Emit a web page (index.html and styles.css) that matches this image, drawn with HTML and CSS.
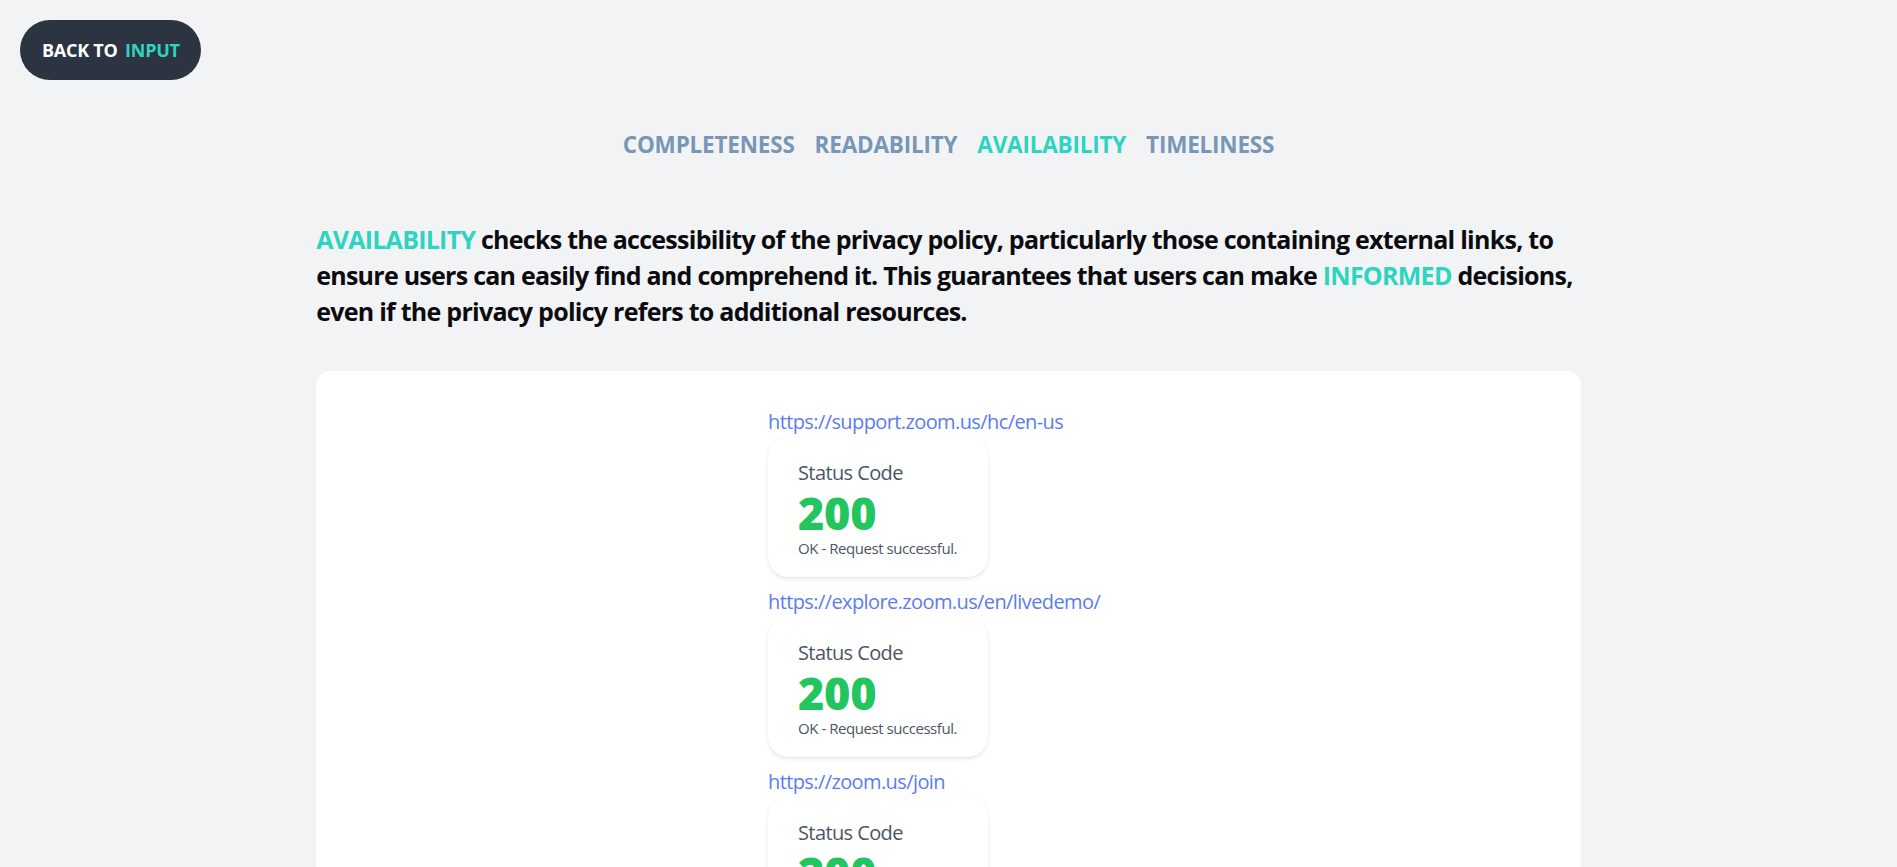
FILE: index.html
```html
<!DOCTYPE html>
<html lang="en">
<head>
<meta charset="utf-8">
<title>Availability</title>
<link rel="stylesheet" href="styles.css">
</head>
<body class="page">
  <header class="topbar">
    <a class="back-btn" href="#">BACK TO <span class="accent">INPUT</span></a>
  </header>

  <nav class="tabs">
    <a class="tab" href="#">COMPLETENESS</a>
    <a class="tab" href="#">READABILITY</a>
    <a class="tab tab-active" href="#">AVAILABILITY</a>
    <a class="tab" href="#">TIMELINESS</a>
  </nav>

  <main class="content">
    <p class="intro"><span class="accent">AVAILABILITY</span> checks the accessibility of the privacy policy, particularly those containing external links, to ensure users can easily find and comprehend it. This guarantees that users can make <span class="accent">INFORMED</span> decisions, even if the privacy policy refers to additional resources.</p>

    <section class="panel">
      <ul class="link-list">
        <li class="link-item">
          <a class="url" href="#">https://support.zoom.us/hc/en-us</a>
          <div class="stat">
            <div class="stat-title">Status Code</div>
            <div class="stat-value">200</div>
            <div class="stat-desc">OK - Request successful.</div>
          </div>
        </li>
        <li class="link-item">
          <a class="url" href="#">https://explore.zoom.us/en/livedemo/</a>
          <div class="stat">
            <div class="stat-title">Status Code</div>
            <div class="stat-value">200</div>
            <div class="stat-desc">OK - Request successful.</div>
          </div>
        </li>
        <li class="link-item">
          <a class="url" href="#">https://zoom.us/join</a>
          <div class="stat">
            <div class="stat-title">Status Code</div>
            <div class="stat-value">200</div>
            <div class="stat-desc">OK - Request successful.</div>
          </div>
        </li>
      </ul>
    </section>
  </main>
</body>
</html>
```

FILE: styles.css
```css
* {
  box-sizing: border-box;
}

.page {
  margin: 0;
  background: #f2f3f5;
  font-family: "Open Sans", "Noto Sans", "Liberation Sans", sans-serif;
  color: #111;
}

.accent {
  color: #2dd4bf;
}

.topbar {
  padding: 20px 0 0 20px;
}

.back-btn {
  display: inline-flex;
  align-items: center;
  height: 60px;
  padding: 0 21px 0 22px;
  border-radius: 30px;
  background: #2c3442;
  color: #ffffff;
  font-size: 18px;
  font-weight: 700;
  letter-spacing: -0.25px;
  text-decoration: none;
  white-space: pre;
}

.back-btn .accent {
  margin-left: 3px;
}

.tabs {
  display: flex;
  justify-content: center;
  gap: 20px;
  margin-top: 47px;
  line-height: 35px;
}

.tab {
  font-size: 22.5px;
  font-weight: 700;
  letter-spacing: -0.2px;
  color: #7896b6;
  text-decoration: none;
}

.tab-active {
  color: #2dd4bf;
}

.content {
  width: 66.6667%;
  margin: 59px auto 0;
}

.intro {
  margin: 0;
  font-size: 25px;
  line-height: 36px;
  font-weight: 700;
  letter-spacing: -0.74px;
  color: #0b0b0f;
}

.panel {
  margin-top: 42px;
  background: #ffffff;
  border-radius: 15px;
  padding: 36px 0 40px;
}

.link-list {
  list-style: none;
  margin: 0 auto;
  padding: 0;
  width: 361px;
}

.link-item {
  margin-bottom: 10px;
}

.url {
  display: block;
  font-size: 20px;
  line-height: 30px;
  letter-spacing: -0.6px;
  color: #5b7cf1;
  text-decoration: none;
  white-space: nowrap;
}

.stat {
  width: 220px;
  padding: 21px 30px 19px;
  background: #ffffff;
  border-radius: 20px;
  box-shadow: 0 2px 4px rgba(0, 0, 0, 0.08), 0 1px 2px -1px rgba(0, 0, 0, 0.1), 0 0 1px rgba(0, 0, 0, 0.06);
  white-space: nowrap;
}

.stat-title {
  font-size: 20px;
  line-height: 30px;
  letter-spacing: -0.6px;
  color: #4b5563;
}

.stat-value {
  font-size: 45px;
  line-height: 50px;
  font-weight: 800;
  letter-spacing: -0.3px;
  color: #22c55e;
}

.stat-desc {
  font-size: 15px;
  line-height: 20px;
  letter-spacing: -0.45px;
  color: #4b5563;
}
```
